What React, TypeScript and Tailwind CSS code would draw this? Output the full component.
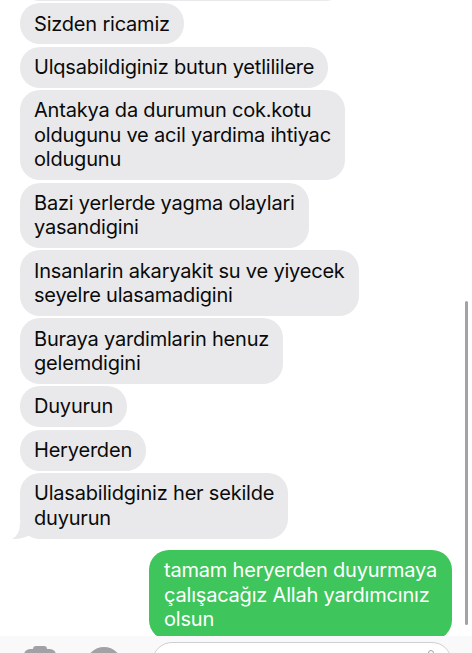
import React from "react";

const gray = "bg-[#e9e9eb] text-[#0a0a0a]";

function Bubble({ children, cls = "" }: { children: React.ReactNode; cls?: string }) {
  return (
    <div className={`rounded-[20px] px-[14px] py-[8.25px] text-[20px] leading-[24.5px] tracking-[-0.2px] ${gray} ${cls}`}>
      {children}
    </div>
  );
}

export default function App() {
  return (
    <div
      className="relative w-[472px] h-[653px] overflow-hidden bg-white"
      style={{ fontFamily: "Inter, 'Noto Sans', sans-serif" }}
    >
      <div className="flex flex-col items-start gap-[2.4px] pl-[20px] mt-[-38px]">
        <Bubble cls="w-[325px] h-[39px]">{" "}</Bubble>
        <Bubble>Sizden ricamiz</Bubble>
        <Bubble>Ulqsabildiginiz butun yetlililere</Bubble>
        <Bubble>
          Antakya da durumun cok.kotu
          <br />
          oldugunu ve acil yardima ihtiyac
          <br />
          oldugunu
        </Bubble>
        <Bubble>
          Bazi yerlerde yagma olaylari
          <br />
          yasandigini
        </Bubble>
        <Bubble>
          Insanlarin akaryakit su ve yiyecek
          <br />
          seyelre ulasamadigini
        </Bubble>
        <Bubble>
          Buraya yardimlarin henuz
          <br />
          gelemdigini
        </Bubble>
        <Bubble>Duyurun</Bubble>
        <Bubble>Heryerden</Bubble>
        <div className="relative">
          <svg className="absolute left-[-8px] bottom-0" width="24" height="20" viewBox="0 0 24 20">
            <path d="M20 0 L20 14 Q14 20 0 20 Q8 16 8 4 Z" fill="#e9e9eb" />
          </svg>
          <Bubble cls="relative">
            Ulasabilidginiz her sekilde
            <br />
            duyurun
          </Bubble>
        </div>
        <div className="self-end mr-[20px] mt-[9px] rounded-[20px] bg-[#3ec55b] text-white px-[15px] py-[8.25px] text-[20px] leading-[24.5px] tracking-[-0.2px]">
          tamam heryerden duyurmaya
          <br />
          çalışacağız Allah yardımcınız
          <br />
          olsun
        </div>
      </div>

      {/* scrollbar */}
      <div className="absolute right-[4px] top-[301px] w-[3px] h-[324px] rounded-full bg-[#a3a3a3]" />

      {/* bottom toolbar */}
      <div className="absolute left-0 right-0 top-[636px] h-[30px] bg-[#f8f9f8]">
        <div className="absolute left-[24px] top-[13px] w-[32px] h-[24px] rounded-[6px] bg-[#a2a2a6]" />
        <div className="absolute left-[33px] top-[10px] w-[14px] h-[6px] rounded-t-[3px] bg-[#a2a2a6]" />
        <div className="absolute left-[86px] top-[11px] w-[36px] h-[36px] rounded-full bg-[#a2a2a6]" />
        <div className="absolute left-[152px] top-[6px] w-[300px] h-[40px] rounded-[20px] border border-[#cfcfd3] bg-white" />
        <div className="absolute left-[428px] top-[14px] w-[6px] h-[10px] rounded-full border border-[#a2a2a6]" />
      </div>
    </div>
  );
}
